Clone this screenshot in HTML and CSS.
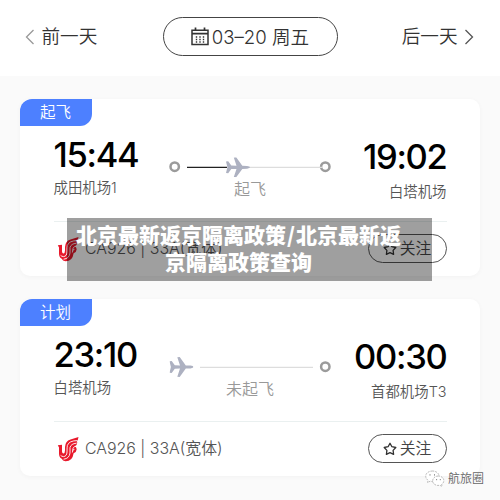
FILE: index.html
```
<!DOCTYPE html>
<html lang="zh-CN">
<head>
<meta charset="utf-8">
<title>航班动态</title>
<link rel="stylesheet" href="styles.css">
</head>
<body>
<svg width="0" height="0" class="defs">
  <symbol id="plane" viewBox="0 0 24 20"><path d="M0 4.2 2.2 4 5.3 8.2 10.5 8.4 7.8 .3 10.2 0 16.3 8.4 21 8.6Q24 9.1 24 10T21 11.4L16.3 11.6 10.2 20 7.8 19.7 10.5 11.6 5.3 11.8 2.2 16 0 15.8 1.4 10Z"/></symbol>
  <symbol id="star" viewBox="0 0 14 14"><path d="M7 1.2 8.9 4.7 12.8 5.5 10.1 8.4 10.6 12.4 7 10.7 3.4 12.4 3.9 8.4 1.2 5.5 5.1 4.7Z" fill="none" stroke="#333" stroke-width="1.3" stroke-linejoin="round"/></symbol>
  <symbol id="phoenix" viewBox="0 0 22 26">
    <path fill="#e8192c" d="M.8 9.2 5 8.8V15.5Q5.2 17.6 6.6 17.4 7.9 17.2 8 14.5V11Q8.2 5 13.5 3.4L21.5 1Q21 4.5 19.6 6.2L20.4 6.4Q20 9.5 17.5 10.6 19.5 11 19.7 13.2 19.5 16.2 16.6 17.2 15.5 25.4 8.5 25.3 5.5 25 4.8 22.8 2 21.5 2 17.5V11.5Z"/>
    <path fill="none" stroke="#fff" stroke-width=".9" d="M6.3 9V15M20.5 4.6Q12 4.6 10.4 9.4 10 11 10 16 9.8 20.4 6.5 20.6 4.5 20.4 3.6 19.4M19.6 7.2Q14 7.6 13 11.5V17Q12.3 22.6 6.6 23.2M17.6 10.4Q15.6 11.2 15.4 16.5M15.6 14.2 17.4 13.4"/>
  </symbol>
</svg>
<header class="topbar">
  <div class="prev">
    <svg class="chev" width="10" height="16" viewBox="0 0 10 16"><path d="M8.5 1 1.5 8 8.5 15" fill="none" stroke="#999" stroke-width="1.3"/></svg>
    <span>前一天</span>
  </div>
  <div class="date">
    <svg width="18" height="19" viewBox="0 0 18 19"><path fill="none" stroke="#333" stroke-width="1.5" d="M1 3.2H17V17.5H1Z"/><path fill="none" stroke="#333" stroke-width="1.7" d="M4.5 .5V4M13.5 .5V4M1 6.7H17"/><path fill="none" stroke="#333" stroke-width="1.4" stroke-dasharray="1.4 2.1" d="M4.8 10H14M4.8 12.5H14M4.8 15H14"/></svg>
    <span>03–20 周五</span>
  </div>
  <div class="next">
    <span>后一天</span>
    <svg class="chev" width="10" height="16" viewBox="0 0 10 16"><path d="M1.5 1 8.5 8 1.5 15" fill="none" stroke="#555" stroke-width="1.3"/></svg>
  </div>
</header>
<main class="list">
  <section class="card">
    <div class="tab">起飞</div>
    <div class="flight">
      <div class="from"><div class="time">15:44</div><div class="place">成田机场1</div></div>
      <div class="route">
        <svg width="162" height="24" viewBox="0 0 162 24"><circle cx="5.7" cy="11.7" r="4.2" fill="none" stroke="#9b9b9b" stroke-width="2.5"/><path d="M18 12.3H58" stroke="#222" stroke-width="1.2"/><circle cx="156.3" cy="11.7" r="4.2" fill="none" stroke="#9b9b9b" stroke-width="2.5"/><path d="M80 12.3H154" stroke="#ddd" stroke-width="1.2"/><use href="#plane" x="57" y="2.3" width="24" height="20" fill="#adb1c1"/></svg>
        <div class="state">起飞</div>
      </div>
      <div class="to"><div class="time">19:02</div><div class="place">白塔机场</div></div>
    </div>
    <div class="foot">
      <svg class="logo" width="22" height="26"><use href="#phoenix"/></svg>
      <span class="no">CA926 | 33A(宽体)</span>
      <div class="follow"><svg width="14" height="14"><use href="#star"/></svg><span>关注</span></div>
    </div>
  </section>
  <section class="card">
    <div class="tab">计划</div>
    <div class="flight">
      <div class="from"><div class="time">23:10</div><div class="place">白塔机场</div></div>
      <div class="route">
        <svg width="162" height="24" viewBox="0 0 162 24"><use href="#plane" x="0.5" y="2" width="24" height="20" fill="#adb1c1"/><path d="M31 12.3H144" stroke="#ddd" stroke-width="1.2"/><circle cx="156.3" cy="11.7" r="4.2" fill="none" stroke="#9b9b9b" stroke-width="2.5"/></svg>
        <div class="state">未起飞</div>
      </div>
      <div class="to"><div class="time">00:30</div><div class="place">首都机场T3</div></div>
    </div>
    <div class="foot">
      <svg class="logo" width="22" height="26"><use href="#phoenix"/></svg>
      <span class="no">CA926 | 33A(宽体)</span>
      <div class="follow"><svg width="14" height="14"><use href="#star"/></svg><span>关注</span></div>
    </div>
  </section>
</main>
<div class="banner">北京最新返京隔离政策<span class="slash">/</span>北京最新返<br>京隔离政策查询</div>
<div class="mark">
  <svg width="20" height="17" viewBox="0 0 20 17"><g fill="#fff" stroke="#aaa" stroke-width=".8" stroke-dasharray="2 1"><path d="M7.5 1C3.5 1 .7 3.3.7 6.2c0 1.8 1 3.2 2.5 4.2L2.5 12.6 5.2 11.2C10 12.4 14 10 14 6.2 14 3.3 11.3 1 7.5 1Z"/><path d="M13.3 6C10 6 7.7 8.2 7.7 10.8c0 3.2 3.3 5.3 7 4.5L17.2 16.3 16.7 14.3C20.8 11.5 18.6 6 13.3 6Z"/></g><path d="M5 4.2V5.6M9.5 4.2V5.6M11.6 9V10.2M15.3 9V10.2" stroke="#888"/></svg>
  <span>航旅圈</span>
</div>
</body>
</html>
```
FILE: styles.css
```
* { box-sizing: border-box; }
body {
  margin: 0;
  width: 500px;
  height: 500px;
  overflow: hidden;
  position: relative;
  background: #fafafa;
  color: #333;
  font-family: Inter, "Noto Sans CJK SC", sans-serif;
  font-weight: 350;
}
svg { display: block; flex: none; }
.defs { position: absolute; }
.topbar {
  height: 76px;
  padding: 17px 26px 0 25px;
  display: flex;
  align-items: flex-start;
  justify-content: space-between;
  background: #fff;
  font-size: 18.6px;
  line-height: 39px;
}
.prev, .next { display: flex; align-items: center; height: 39px; width: 110px; gap: 6.5px; }
.next { justify-content: flex-end; }
.date {
  width: 175px;
  height: 39px;
  margin-left: 1px;
  border: 1.4px solid #444;
  border-radius: 20px;
  display: flex;
  align-items: center;
  justify-content: center;
  gap: 3px;
  line-height: 36px;
}
.list { padding: 22.5px 20px 0; display: flex; flex-direction: column; gap: 22.5px; }
.card {
  height: 177.5px;
  border-radius: 10px;
  background: #fff;
  box-shadow: 0 1px 5px rgba(0, 0, 0, .035);
}
.tab {
  width: 72px;
  height: 27px;
  padding-left: 20px;
  border-radius: 12px 0 12px 0;
  background: #4d80ff;
  color: #fff;
  font-size: 15.5px;
  line-height: 27px;
}
.flight {
  height: 96px;
  margin: 0 33.5px;
  padding-top: 9px;
  display: grid;
  grid-template-columns: 115.5px 162px 1fr;
  border-bottom: 1.5px solid #eaf0f0;
}
.time {
  color: #000;
  font-size: 34.5px;
  font-weight: 500;
  letter-spacing: -1.3px;
  line-height: 40px;
  white-space: nowrap;
}
.place { margin-top: 3px; color: #555; font-size: 14.4px; line-height: 20px; white-space: nowrap; }
.to { padding-top: 2px; text-align: right; }
.to .place { margin-top: 5px; }
.to .time { margin-left: -20px; }
.route { padding-top: 20.5px; text-align: center; }
.state { color: #999; font-size: 16px; line-height: 20px; }
.foot {
  height: 54px;
  margin: 0 33.5px;
  padding-left: 3px;
  display: flex;
  align-items: center;
}
.no { margin: -2px 0 0 6.5px; color: #555; font-size: 15.9px; white-space: nowrap; }
.follow {
  width: 79px;
  height: 29px;
  margin-left: auto;
  border: 1.3px solid #555;
  border-radius: 15px;
  display: flex;
  align-items: center;
  justify-content: center;
  gap: 3px;
  color: #444;
  font-size: 15.8px;
  line-height: 27px;
}
.banner {
  position: absolute;
  left: 67px;
  top: 218px;
  width: 365px;
  height: 63px;
  padding: 3px 22px 0 0;
  background: rgba(0, 0, 0, .375);
  color: #fff;
  font-family: "Noto Sans CJK SC", sans-serif;
  font-size: 21px;
  font-weight: 900;
  line-height: 26.5px;
  text-align: center;
  white-space: nowrap;
}
.slash { padding: 0 1px; }
.mark {
  position: absolute;
  left: 425px;
  top: 470px;
  display: flex;
  align-items: center;
  gap: 3px;
  color: #666;
  font-size: 12px;
  line-height: 17px;
}
```
